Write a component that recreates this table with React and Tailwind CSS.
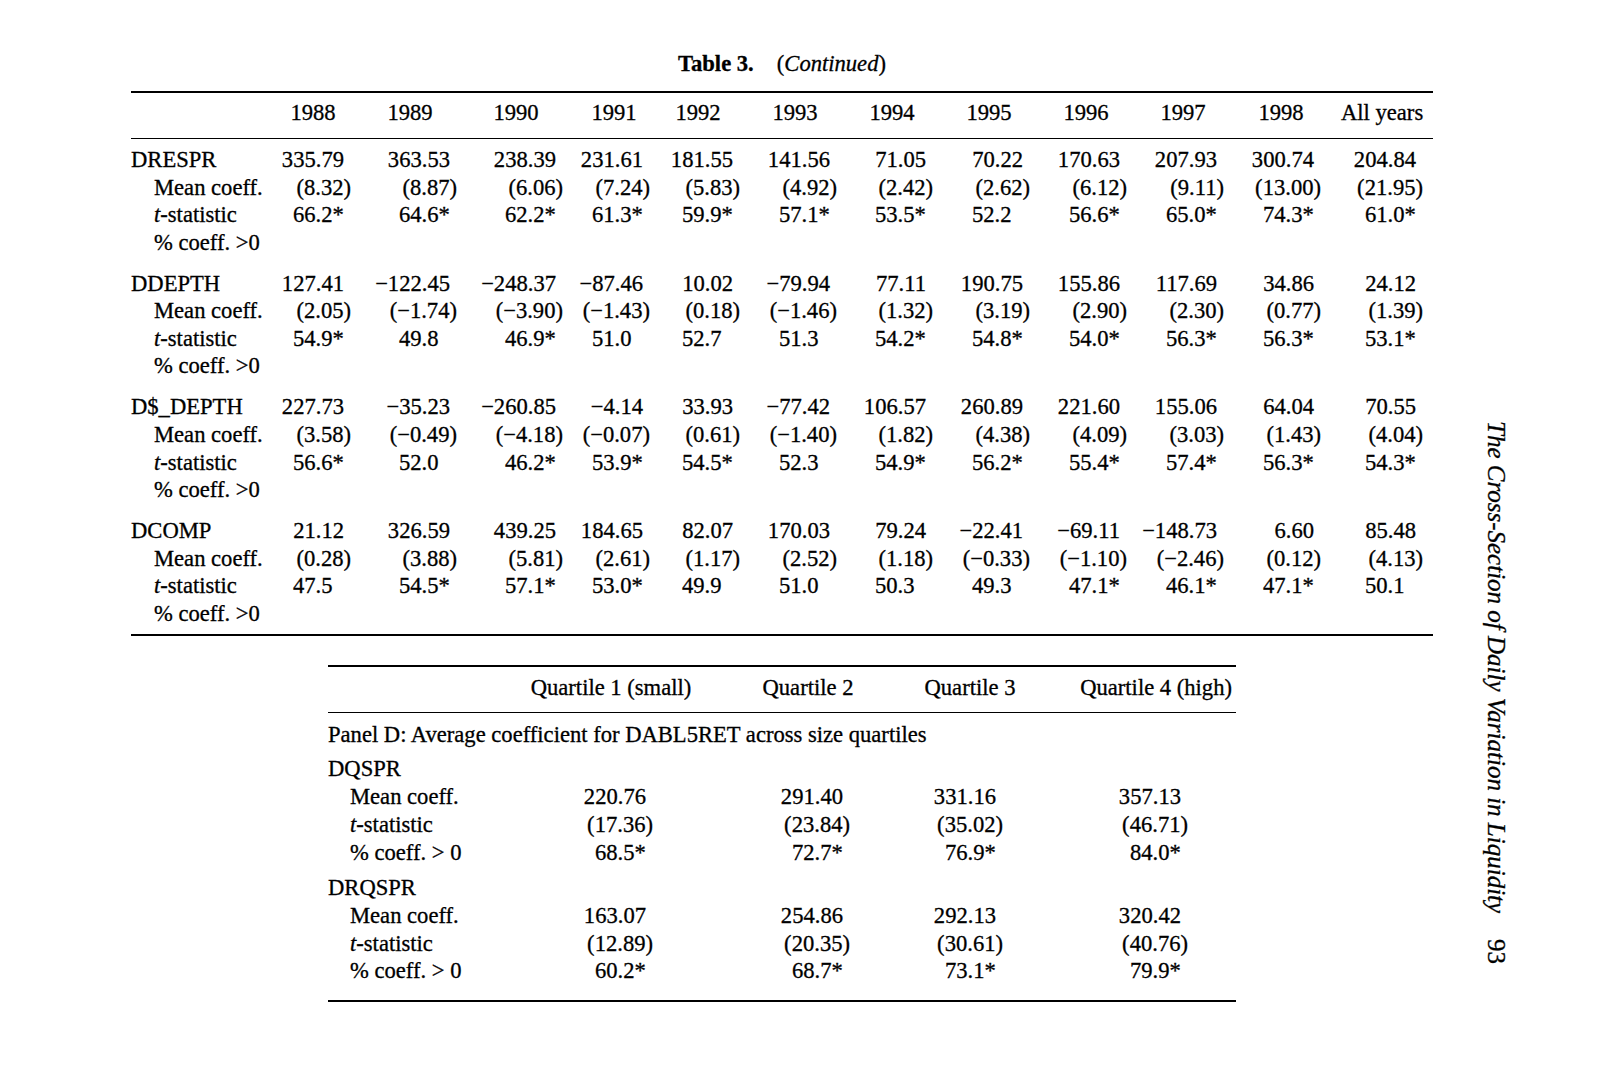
import React from "react";

const years = ["1988", "1989", "1990", "1991", "1992", "1993", "1994", "1995", "1996", "1997", "1998", "All years"];

// small nudges so the year headings sit where the print set them
const yearPad = ["pl-[6px]", "pr-[12px]", "pr-[12px]", "pl-[10px]", "pr-[2px]", "pr-[2px]", "", "", "", "", "pl-[2px]", "pr-[2px]"];

// track widths so that every 82px value box ends where the print put it
const mainCols = "grid-cols-[138px_106px_106px_87px_90px_97px_96px_97px_97px_97px_97px_102px_92px]";

const groups = [
  {
    name: "DRESPR",
    mean: ["335.79", "363.53", "238.39", "231.61", "181.55", "141.56", "71.05", "70.22", "170.63", "207.93", "300.74", "204.84"],
    t: ["(8.32)", "(8.87)", "(6.06)", "(7.24)", "(5.83)", "(4.92)", "(2.42)", "(2.62)", "(6.12)", "(9.11)", "(13.00)", "(21.95)"],
    pct: ["66.2*", "64.6*", "62.2*", "61.3*", "59.9*", "57.1*", "53.5*", "52.2", "56.6*", "65.0*", "74.3*", "61.0*"],
  },
  {
    name: "DDEPTH",
    mean: ["127.41", "−122.45", "−248.37", "−87.46", "10.02", "−79.94", "77.11", "190.75", "155.86", "117.69", "34.86", "24.12"],
    t: ["(2.05)", "(−1.74)", "(−3.90)", "(−1.43)", "(0.18)", "(−1.46)", "(1.32)", "(3.19)", "(2.90)", "(2.30)", "(0.77)", "(1.39)"],
    pct: ["54.9*", "49.8", "46.9*", "51.0", "52.7", "51.3", "54.2*", "54.8*", "54.0*", "56.3*", "56.3*", "53.1*"],
  },
  {
    name: "D$_DEPTH",
    mean: ["227.73", "−35.23", "−260.85", "−4.14", "33.93", "−77.42", "106.57", "260.89", "221.60", "155.06", "64.04", "70.55"],
    t: ["(3.58)", "(−0.49)", "(−4.18)", "(−0.07)", "(0.61)", "(−1.40)", "(1.82)", "(4.38)", "(4.09)", "(3.03)", "(1.43)", "(4.04)"],
    pct: ["56.6*", "52.0", "46.2*", "53.9*", "54.5*", "52.3", "54.9*", "56.2*", "55.4*", "57.4*", "56.3*", "54.3*"],
  },
  {
    name: "DCOMP",
    mean: ["21.12", "326.59", "439.25", "184.65", "82.07", "170.03", "79.24", "−22.41", "−69.11", "−148.73", "6.60", "85.48"],
    t: ["(0.28)", "(3.88)", "(5.81)", "(2.61)", "(1.17)", "(2.52)", "(1.18)", "(−0.33)", "(−1.10)", "(−2.46)", "(0.12)", "(4.13)"],
    pct: ["47.5", "54.5*", "57.1*", "53.0*", "49.9", "51.0", "50.3", "49.3", "47.1*", "46.1*", "47.1*", "50.1"],
  },
];

const panelD = [
  {
    name: "DQSPR",
    mean: ["220.76", "291.40", "331.16", "357.13"],
    t: ["(17.36)", "(23.84)", "(35.02)", "(46.71)"],
    pct: ["68.5*", "72.7*", "76.9*", "84.0*"],
  },
  {
    name: "DRQSPR",
    mean: ["163.07", "254.86", "292.13", "320.42"],
    t: ["(12.89)", "(20.35)", "(30.61)", "(40.76)"],
    pct: ["60.2*", "68.7*", "73.1*", "79.9*"],
  },
];

// mean sits 7px in from the closing paren, percentages start where a 4-digit mean would
const Val = ({ kind, children }) => {
  if (kind === "mean") return <span className="pr-[7px]">{children}</span>;
  if (kind === "pct") return <span className="w-[58px] text-left">{children}</span>;
  return <span>{children}</span>;
};

const Stat = () => (
  <>
    <i>t</i>-statistic
  </>
);

const MainRow = ({ label, indent, kind, values }) => (
  <div className={`grid ${mainCols} leading-[27.6px]`}>
    <div className={indent ? "pl-[23px] whitespace-nowrap" : "whitespace-nowrap"}>{label}</div>
    {years.map((y, i) => (
      <div key={y} className="w-[82px] flex justify-end whitespace-nowrap">
        {values && <Val kind={kind}>{values[i]}</Val>}
      </div>
    ))}
  </div>
);

const quartCols = "grid-cols-[188px_190px_204px_120px_206px]";
const quartPad = ["pr-[53px]", "pr-[60px]", "pr-[27px]", "pr-[48px]"];

const QuartRow = ({ label, kind, values }) => (
  <div className={`grid ${quartCols} leading-[27.7px]`}>
    <div className="pl-[22px] whitespace-nowrap">{label}</div>
    {values.map((v, i) => (
      <div key={i} className={`flex justify-end whitespace-nowrap ${quartPad[i]}`}>
        <Val kind={kind}>{v}</Val>
      </div>
    ))}
  </div>
);

export default function App() {
  return (
    <div className="min-h-screen w-[1600px] bg-white text-black [-webkit-text-stroke:0.3px_#000] font-['Liberation_Serif',serif] text-[22.6px] flex overflow-hidden">
      <div className="pl-[131px] w-[1433px]">
        <div className="mt-[50px] leading-[28px] text-center whitespace-nowrap">
          <b>Table 3.</b>
          <span className="pl-[23px]">
            (<i>Continued</i>)
          </span>
        </div>

        <div className="mt-[13px] w-[1302px] border-t-2 border-b-2 border-black">
          <div className={`grid ${mainCols} leading-[28px] pt-[6px] pb-[11px] border-b border-black`}>
            <div />
            {years.map((y, i) => (
              <div key={y} className={`w-[82px] text-center whitespace-nowrap ${yearPad[i]}`}>
                {y}
              </div>
            ))}
          </div>

          <div className="pt-[7px] pb-[7px] flex flex-col gap-[13.3px]">
            {groups.map((g) => (
              <div key={g.name}>
                <MainRow label={g.name} kind="mean" values={g.mean} />
                <MainRow label="Mean coeff." indent kind="t" values={g.t} />
                <MainRow label={<Stat />} indent kind="pct" values={g.pct} />
                <MainRow label="% coeff. >0" indent />
              </div>
            ))}
          </div>
        </div>

        <div className="mt-[29px] ml-[197px] w-[908px] border-t-2 border-b-2 border-black">
          <div className={`grid ${quartCols} leading-[28px] pt-[7px] pb-[10px] border-b border-black`}>
            <div />
            <div className="text-center whitespace-nowrap">Quartile 1 (small)</div>
            <div className="text-center whitespace-nowrap">Quartile 2</div>
            <div className="text-center whitespace-nowrap">Quartile 3</div>
            <div className="text-right pr-[4px] whitespace-nowrap">Quartile 4 (high)</div>
          </div>

          <div className="pt-[8px] pb-[15px]">
            <div className="leading-[28px] whitespace-nowrap">
              Panel D: Average coefficient for DABL5RET across size quartiles
            </div>
            <div className="mt-[6px] flex flex-col gap-[8px]">
              {panelD.map((g) => (
                <div key={g.name}>
                  <div className="leading-[27.7px]">{g.name}</div>
                  <QuartRow label="Mean coeff." kind="mean" values={g.mean} />
                  <QuartRow label={<Stat />} kind="t" values={g.t} />
                  <QuartRow label="% coeff. > 0" kind="pct" values={g.pct} />
                </div>
              ))}
            </div>
          </div>
        </div>
      </div>

      <div className="ml-[48px] pt-[421px]">
        <div className="[writing-mode:vertical-rl] text-[25px] leading-[30px] whitespace-nowrap">
          <i>The Cross-Section of Daily Variation in Liquidity</i>
          <span className="pt-[26px] inline-block">93</span>
        </div>
      </div>
    </div>
  );
}
